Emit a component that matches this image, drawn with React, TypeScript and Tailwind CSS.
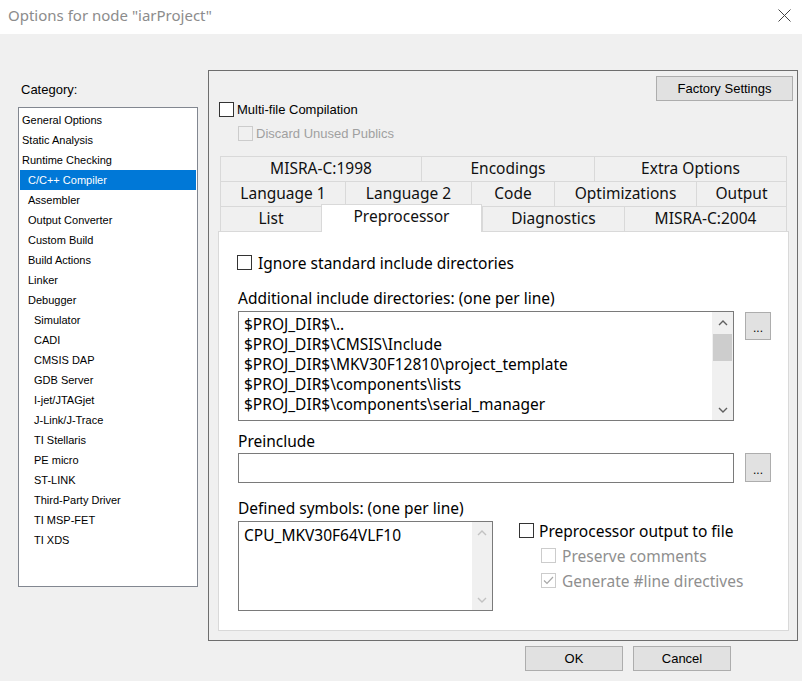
import React from "react";

const UI = { fontFamily: '"Noto Sans", "Open Sans", sans-serif' };
const SYS = { fontFamily: '"Liberation Sans", Arial, sans-serif' };

type Cat = { label: string; level: number; selected?: boolean };

const CATEGORIES: Cat[] = [
  { label: "General Options", level: 0 },
  { label: "Static Analysis", level: 0 },
  { label: "Runtime Checking", level: 0 },
  { label: "C/C++ Compiler", level: 1, selected: true },
  { label: "Assembler", level: 1 },
  { label: "Output Converter", level: 1 },
  { label: "Custom Build", level: 1 },
  { label: "Build Actions", level: 1 },
  { label: "Linker", level: 1 },
  { label: "Debugger", level: 1 },
  { label: "Simulator", level: 2 },
  { label: "CADI", level: 2 },
  { label: "CMSIS DAP", level: 2 },
  { label: "GDB Server", level: 2 },
  { label: "I-jet/JTAGjet", level: 2 },
  { label: "J-Link/J-Trace", level: 2 },
  { label: "TI Stellaris", level: 2 },
  { label: "PE micro", level: 2 },
  { label: "ST-LINK", level: 2 },
  { label: "Third-Party Driver", level: 2 },
  { label: "TI MSP-FET", level: 2 },
  { label: "TI XDS", level: 2 },
];

const TAB_ROWS: [string, number][][] = [
  [["MISRA-C:1998", 201], ["Encodings", 173], ["Extra Options", 193]],
  [["Language 1", 125], ["Language 2", 126], ["Code", 83], ["Optimizations", 142], ["Output", 91]],
  [["List", 101], ["Preprocessor", 161], ["Diagnostics", 142], ["MISRA-C:2004", 163]],
];

const INCLUDES = [
  "$PROJ_DIR$\\..",
  "$PROJ_DIR$\\CMSIS\\Include",
  "$PROJ_DIR$\\MKV30F12810\\project_template",
  "$PROJ_DIR$\\components\\lists",
  "$PROJ_DIR$\\components\\serial_manager",
];

function Checkbox({ disabled, checked }: { disabled?: boolean; checked?: boolean }) {
  return (
    <span
      className={`flex h-[15px] w-[15px] shrink-0 items-center justify-center border ${
        disabled ? "border-[#cccccc]" : "border-[#333333] bg-white"
      }`}
    >
      {checked && (
        <svg width="11" height="9" viewBox="0 0 11 9">
          <path d="M1 4.5 L4 7.5 L10 1" fill="none" stroke="#a8a8a8" strokeWidth="1.2" />
        </svg>
      )}
    </span>
  );
}

function Chevron({ up, color }: { up?: boolean; color: string }) {
  return (
    <svg width="10" height="6" viewBox="0 0 10 6">
      <path
        d={up ? "M1 5 L5 1 L9 5" : "M1 1 L5 5 L9 1"}
        fill="none"
        stroke={color}
        strokeWidth="1.4"
      />
    </svg>
  );
}

function DotsButton({ className = "" }: { className?: string }) {
  return (
    <div
      className={`flex w-[26px] items-end justify-center border border-[#adadad] bg-[#e1e1e1] pb-[6px] text-[12px] leading-[10px] text-black ${className}`}
      style={SYS}
    >
      ...
    </div>
  );
}

function Tabs() {
  return (
    <div className="ml-[11px] mt-[15px]">
      {TAB_ROWS.map((row, ri) => (
        <div key={ri} className="flex h-[25px]">
          {row.map(([label, w], i) => {
            const selected = label === "Preprocessor";
            const last = i === row.length - 1;
            return (
              <div
                key={label}
                className={`flex items-center justify-center border-l border-t border-[#d9d9d9] text-[15.5px] text-[#111] ${
                  last ? "border-r" : ""
                } ${
                  selected
                    ? "relative z-10 -mt-[2px] h-[28px] border-r bg-white pb-[3px]"
                    : "h-[25px] bg-[#f0f0f0]"
                }`}
                style={{ ...UI, width: w }}
              >
                {label}
              </div>
            );
          })}
        </div>
      ))}
    </div>
  );
}

function PreprocessorPage() {
  return (
    <div
      className="ml-[9px] h-[400px] w-[571px] border border-[#d9d9d9] bg-white pl-[19px] pt-[23px] text-[15.5px] text-black"
      style={UI}
    >
      <div className="-ml-[1px] flex h-[15px] items-center gap-[6px]">
        <Checkbox />
        <span className="leading-[20px]">Ignore standard include directories</span>
      </div>

      <div className="mt-[18px] leading-[20px]">Additional include directories: (one per line)</div>
      <div className="mt-[3px] flex items-start gap-[11px]">
        <div className="flex h-[110px] w-[496px] border border-[#7a7a7a]">
          <div className="flex-1 pl-[5px] pt-[2px] leading-[20px]">
            {INCLUDES.map((line) => (
              <div key={line} className="whitespace-nowrap">
                {line}
              </div>
            ))}
          </div>
          <div className="flex w-[21px] flex-col bg-[#f0f0f0]">
            <div className="flex h-[21px] items-center justify-center">
              <Chevron up color="#606060" />
            </div>
            <div className="mx-auto mt-[1px] h-[27px] w-[19px] bg-[#cdcdcd]" />
            <div className="flex-1" />
            <div className="flex h-[21px] items-center justify-center">
              <Chevron color="#606060" />
            </div>
          </div>
        </div>
        <DotsButton className="mt-[1px] h-[28px]" />
      </div>

      <div className="mt-[10px] leading-[20px]">Preinclude</div>
      <div className="mt-[2px] flex items-start gap-[11px]">
        <div className="h-[30px] w-[496px] border border-[#7a7a7a]" />
        <DotsButton className="h-[29px]" />
      </div>

      <div className="mt-[15px] leading-[20px]">Defined symbols: (one per line)</div>
      <div className="mt-[3px] flex items-start">
        <div className="flex h-[90px] w-[255px] border border-[#7a7a7a]">
          <div className="flex-1 pl-[5px] pt-[3px] leading-[20px]">CPU_MKV30F64VLF10</div>
          <div className="flex w-[20px] flex-col justify-between bg-[#f0f0f0]">
            <div className="flex h-[21px] items-center justify-center">
              <Chevron up color="#c2c2c2" />
            </div>
            <div className="flex h-[21px] items-center justify-center">
              <Chevron color="#c2c2c2" />
            </div>
          </div>
        </div>
        <div className="ml-[26px] mt-[2px] flex flex-col">
          <div className="flex h-[15px] items-center gap-[5px]">
            <Checkbox />
            <span className="leading-[20px]">Preprocessor output to file</span>
          </div>
          <div className="ml-[22px] mt-[10px] flex h-[15px] items-center gap-[6px] text-[#8f8f8f]">
            <Checkbox disabled />
            <span className="leading-[20px]">Preserve comments</span>
          </div>
          <div className="ml-[22px] mt-[10px] flex h-[15px] items-center gap-[6px] text-[#8f8f8f]">
            <Checkbox disabled checked />
            <span className="leading-[20px]">Generate #line directives</span>
          </div>
        </div>
      </div>
    </div>
  );
}

export default function App() {
  return (
    <div className="h-[681px] w-[802px] overflow-hidden bg-[#f0f0f0]">
      <div className="flex h-[34px] items-center justify-between bg-white pl-[8px] pr-[11px]">
        <span className="pb-[3px] text-[15px] text-[#8c8c8c]" style={UI}>
          Options for node "iarProject"
        </span>
        <svg width="13" height="13" viewBox="0 0 13 13" className="mb-[3px]">
          <path d="M0.5 0.5 L12.5 12.5 M12.5 0.5 L0.5 12.5" stroke="#444" strokeWidth="1" />
        </svg>
      </div>

      <div className="flex items-start">
        <div className="w-[208px] pl-[18px] pt-[48px]" style={SYS}>
          <div className="pl-[3px] text-[13px] leading-[16px] text-black">Category:</div>
          <div className="mt-[9px] h-[480px] w-[180px] border border-[#828790] bg-white px-px pt-[2px]">
            {CATEGORIES.map((c) => (
              <div
                key={c.label}
                className={`h-[20px] text-[11px] leading-[20px] ${
                  c.selected ? "bg-[#0078d7] text-white" : "text-black"
                } ${c.level === 0 ? "pl-[2px]" : c.level === 1 ? "pl-[8px]" : "pl-[14px]"}`}
              >
                {c.label}
              </div>
            ))}
          </div>
        </div>

        <div className="mt-[36px] h-[571px] w-[590px] border border-[#6e6e6e]">
          <div className="flex justify-end pr-[4px] pt-[5px]">
            <button
              className="h-[25px] w-[137px] border border-[#adadad] bg-[#e1e1e1] text-[13px] text-black"
              style={SYS}
            >
              Factory Settings
            </button>
          </div>
          <div className="ml-[10px] mt-[1px] flex h-[15px] items-center gap-[3px] text-[13px] text-black" style={SYS}>
            <Checkbox />
            <span>Multi-file Compilation</span>
          </div>
          <div className="ml-[29px] mt-[9px] flex h-[15px] items-center gap-[3px] text-[13px] text-[#a0a0a0]" style={SYS}>
            <Checkbox disabled />
            <span>Discard Unused Publics</span>
          </div>
          <Tabs />
          <PreprocessorPage />
        </div>
      </div>

      <div className="mt-[5px] flex justify-end gap-[10px] pr-[71px]" style={SYS}>
        <button className="h-[25px] w-[98px] border border-[#adadad] bg-[#e1e1e1] text-[13px] text-black">OK</button>
        <button className="h-[25px] w-[98px] border border-[#adadad] bg-[#e1e1e1] text-[13px] text-black">Cancel</button>
      </div>
    </div>
  );
}
